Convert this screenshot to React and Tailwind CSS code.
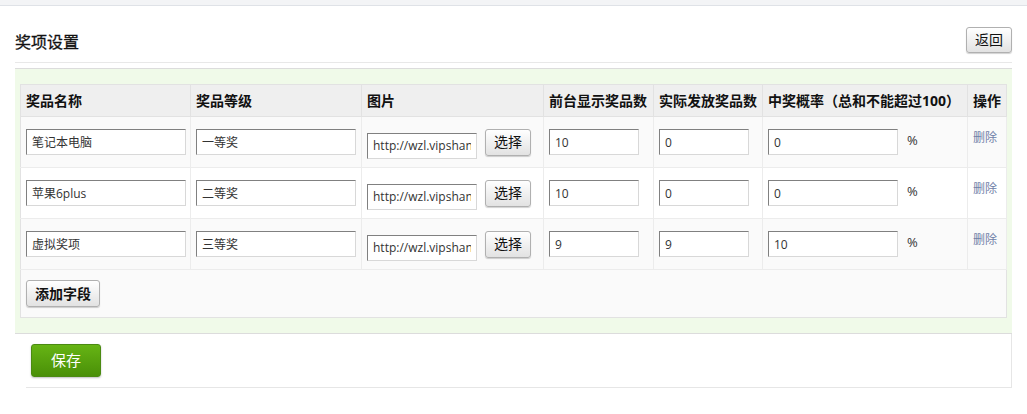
import React from "react";

const font = { fontFamily: '"Open Sans", "Noto Sans CJK SC", sans-serif' };

const rows = [
  { name: "笔记本电脑", level: "一等奖", show: "10", real: "0", rate: "0", bg: "bg-[#fafafa]" },
  { name: "苹果6plus", level: "二等奖", show: "10", real: "0", rate: "0", bg: "bg-white" },
  { name: "虚拟奖项", level: "三等奖", show: "9", real: "9", rate: "10", bg: "bg-[#fafafa]" },
];

function Input({ value, className }) {
  return (
    <input
      readOnly
      value={value}
      className={`h-[26px] border border-t-[#808080] border-l-[#808080] border-r-[#d8d8d8] border-b-[#d8d8d8] bg-white px-[5px] text-[12px] text-[#333] outline-none ${className}`}
    />
  );
}

function Btn({ children, className }) {
  return (
    <button
      className={`rounded-[3px] border border-[#b0b0b0] bg-gradient-to-b from-white to-[#e2e2e2] text-[#111] shadow-[0_1px_1px_rgba(0,0,0,0.18)] ${className}`}
    >
      {children}
    </button>
  );
}

export default function App() {
  const th = "border-r border-[#e2e2e2] px-[5px] text-left text-[14px] font-bold text-[#111] whitespace-nowrap";
  const td = "border-r border-[#ececec] px-[5px] align-middle";
  return (
    <div className="min-h-[414px] w-[1027px] bg-white" style={font}>
      <div className="h-[6px] border-b border-[#dfe2e7] bg-[#f3f4f6]" />
      <div className="px-[15px]">
        <div className="flex h-[57px] items-end justify-between border-b border-[#e8e8e8] pb-[8px]">
          <h2 className="pb-[2px] text-[16px] leading-[20px] text-[#111] [-webkit-text-stroke:0.3px_#111]">奖项设置</h2>
          <Btn className="mb-[1px] h-[26px] w-[46px] text-[14px] leading-none">返回</Btn>
        </div>
        <div className="mt-[5px] border-t border-b border-[#dcdcdc] bg-[#f0fae9] pb-[15px] pl-[5px] pr-[6px] pt-[15px]">
          <table className="w-[986px] table-fixed border-collapse border-l border-r border-[#e2e2e2]">
            <colgroup>
              <col className="w-[170px]" />
              <col className="w-[171px]" />
              <col className="w-[182px]" />
              <col className="w-[110px]" />
              <col className="w-[109px]" />
              <col className="w-[205px]" />
              <col className="w-[39px]" />
            </colgroup>
            <thead>
              <tr className="h-[32px] border-b border-t border-[#e2e2e2] bg-[#efefef]">
                <th className={th}>奖品名称</th>
                <th className={th}>奖品等级</th>
                <th className={th}>图片</th>
                <th className={th}>前台显示奖品数</th>
                <th className={th}>实际发放奖品数</th>
                <th className={th}>中奖概率（总和不能超过100）</th>
                <th className={th}>操作</th>
              </tr>
            </thead>
            <tbody>
              {rows.map((r, i) => (
                <tr key={i} className={`h-[51px] border-b border-[#ececec] ${r.bg}`}>
                  <td className={td}>
                    <Input value={r.name} className="w-[160px]" />
                  </td>
                  <td className={td}>
                    <Input value={r.level} className="w-[160px]" />
                  </td>
                  <td className={td}>
                    <div className="flex items-end gap-[8px] pt-[3px]">
                      <Input value="http://wzl.vipshang360.com/upload/img.jpg" className="w-[110px]" />
                      <Btn className="mb-[3px] h-[27px] w-[46px] text-[14px] leading-none">选择</Btn>
                    </div>
                  </td>
                  <td className={td}>
                    <Input value={r.show} className="w-[90px]" />
                  </td>
                  <td className={td}>
                    <Input value={r.real} className="w-[90px]" />
                  </td>
                  <td className={td}>
                    <div className="flex items-center">
                      <Input value={r.rate} className="w-[130px]" />
                      <span className="ml-[9px] pb-[2px] text-[13px] text-[#333]">%</span>
                    </div>
                  </td>
                  <td className={`${td} align-top pt-[7px]`}>
                    <a className="cursor-pointer text-[12px] text-[#7080a8]">删除</a>
                  </td>
                </tr>
              ))}
              <tr className="h-[48px] border-b border-[#e2e2e2] bg-[#fafafa]">
                <td colSpan={7} className="px-[5px]">
                  <Btn className="h-[27px] w-[74px] text-[14px] font-bold leading-none">添加字段</Btn>
                </td>
              </tr>
            </tbody>
          </table>
        </div>
        <div className="ml-[11px] flex h-[54px] items-center border-b border-r border-[#e6e6e6] pl-[5px]">
          <button className="h-[33px] w-[70px] rounded-[3px] border border-[#4b8a12] bg-gradient-to-b from-[#66b414] to-[#4a9008] text-[15px] text-white shadow-[0_1px_2px_rgba(0,0,0,0.25)]">
            保存
          </button>
        </div>
      </div>
    </div>
  );
}
